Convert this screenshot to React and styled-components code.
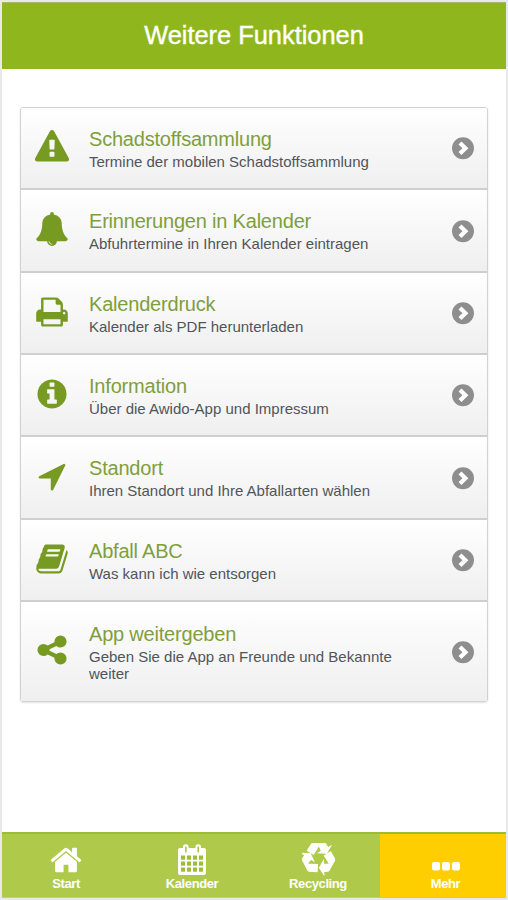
import styled, { createGlobalStyle } from 'styled-components';

const GlobalStyle = createGlobalStyle`
  * {
    box-sizing: border-box;
  }
  body {
    margin: 0;
    background: #ececec;
    font-family: 'Liberation Sans', Arial, sans-serif;
  }
`;

const Screen = styled.div`
  display: flex;
  flex-direction: column;
  width: 508px;
  height: 900px;
  padding: 2px;
  background: #e9e9e9;
`;

const Header = styled.header`
  flex: none;
  height: 67px;
  border-top: 1px solid #a5b773;
  background: #8fb71d;
  display: flex;
  align-items: center;
  justify-content: center;
`;

const Title = styled.h1`
  margin: 0;
  padding-bottom: 2px;
  color: white;
  font-size: 25.4px;
  line-height: 30px;
  font-weight: 400;
  white-space: nowrap;
  -webkit-text-stroke: 0.4px white;
`;

const Content = styled.main`
  flex: 1;
  padding: 38px 18px 0;
  background: white;
`;

const List = styled.div`
  border: 1.5px solid #d2d2d2;
  border-radius: 3px;
  box-shadow: 0 1px 2px rgba(0, 0, 0, 0.12);
  overflow: hidden;
`;

const Row = styled.div`
  height: ${({ $height }) => $height}px;
  display: flex;
  align-items: center;
  padding: 1px 12px 0 14px;
  background: linear-gradient(#ffffff, #efefef);
  border-bottom: 2px solid #cfcfcf;
  &:last-child {
    border-bottom: none;
  }
`;

const RowIcon = styled.svg`
  flex: none;
  width: 34px;
  height: 34px;
  margin-bottom: 4px;
  fill: #769a22;
`;

const RowText = styled.div`
  flex: 1;
  padding-left: 20px;
`;

const RowTitle = styled.div`
  color: #7f9f3c;
  font-size: 20px;
  line-height: 23px;
  padding-bottom: 2px;
  letter-spacing: -0.2px;
  white-space: nowrap;
`;

const RowNote = styled.div`
  max-width: 325px;
  color: #50555a;
  font-size: 15px;
  line-height: 17px;
`;

const Chevron = styled.svg`
  flex: none;
  width: 25px;
  height: 25px;
  fill: #8e8e8e;
`;

const Footer = styled.footer`
  flex: none;
  height: 66px;
  display: grid;
  grid-template-columns: repeat(4, 1fr);
  border-top: 2px solid #9dbc35;
  border-bottom: 1px solid #c0d080;
`;

const Tab = styled.div`
  display: flex;
  flex-direction: column;
  align-items: center;
  padding: 9px 0 0 2px;
  background: ${({ $active }) => ($active ? '#ffce00' : '#afca4b')};
  color: white;
  &:last-child {
    padding-left: 5px;
  }
`;

const TabIcon = styled.div`
  height: 33px;
  display: flex;
  align-items: center;
  svg {
    display: block;
    fill: white;
  }
`;

const TabLabel = styled.div`
  font-size: 13px;
  line-height: 15px;
  font-weight: 700;
  letter-spacing: -0.4px;
`;

const icons = {
  warning: 'M1024 1375v-190q0-14-9.5-23.5t-22.5-9.5h-192q-13 0-22.5 9.5t-9.5 23.5v190q0 14 9.5 23.5t22.5 9.5h192q13 0 22.5-9.5t9.5-23.5zm-2-374l18-459q0-12-10-19-13-11-24-11h-220q-11 0-24 11-10 7-10 21l17 457q0 10 10 16.5t24 6.5h185q14 0 23.5-6.5t10.5-16.5zm-14-934l768 1408q35 63-2 126-17 29-46.5 46t-63.5 17h-1536q-34 0-63.5-17t-46.5-46q-37-63-2-126l768-1408q17-31 47-49t65-18 65 18 47 49z',
  bell: 'M912 1696q0-16-16-16-59 0-101.5-42.5t-42.5-101.5q0-16-16-16t-16 16q0 73 51.5 124.5t124.5 51.5q16 0 16-16zm816-288q0 52-38 90t-90 38h-448q0 106-75 181t-181 75-181-75-75-181h-448q-52 0-90-38t-38-90q50-42 91-88t85-119.5 74.5-158.5 50-206 19.5-260q0-152 117-282.5t307-158.5q-8-19-8-39 0-40 28-68t68-28 68 28 28 68q0 20-8 39 190 28 307 158.5t117 282.5q0 139 19.5 260t50 206 74.5 158.5 85 119.5 91 88z',
  print: 'M448 1536h896v-256h-896v256zm0-640h896v-384h-160q-40 0-68-28t-28-68v-160h-640v640zm1152 64q0-26-19-45t-45-19-45 19-19 45 19 45 45 19 45-19 19-45zm128 0v416q0 13-9.5 22.5t-22.5 9.5h-224v160q0 40-28 68t-68 28h-960q-40 0-68-28t-28-68v-160h-224q-13 0-22.5-9.5t-9.5-22.5v-416q0-79 56.5-135.5t135.5-56.5h64v-544q0-40 28-68t68-28h672q40 0 88 20t76 48l152 152q28 28 48 76t20 88v256h64q79 0 135.5 56.5t56.5 135.5z',
  info: 'M1152 1376v-160q0-14-9-23t-23-9h-96v-512q0-14-9-23t-23-9h-320q-14 0-23 9t-9 23v160q0 14 9 23t23 9h96v320h-96q-14 0-23 9t-9 23v160q0 14 9 23t23 9h448q14 0 23-9t9-23zm-128-896v-160q0-14-9-23t-23-9h-192q-14 0-23 9t-9 23v160q0 14 9 23t23 9h192q14 0 23-9t9-23zm640 416q0 209-103 385.5t-279.5 279.5-385.5 103-385.5-103-279.5-279.5-103-385.5 103-385.5 279.5-279.5 385.5-103 385.5 103 279.5 279.5 103 385.5z',
  location: 'M1593 349l-640 1280q-17 35-57 35-5 0-15-2-22-5-35.5-22.5t-13.5-39.5v-576h-576q-22 0-39.5-13.5t-22.5-35.5 4-42 29-30l1280-640q13-7 29-7 27 0 45 19 15 14 18.5 34.5t-6.5 39.5z',
  book: 'M1703 478q40 57 18 129l-275 906q-19 64-76.5 107.5t-122.5 43.5h-923q-77 0-148.5-53.5t-99.5-131.5q-24-67-2-127 0-4 3-27t4-37q1-8-3-21.5t-3-19.5q2-11 8-21t16.5-23.5 16.5-23.5q23-38 45-91.5t30-91.5q3-10 .5-30t-.5-28q3-11 17-28t17-23q21-36 42-92t25-90q1-9-2.5-32t.5-28q4-13 22-30.5t22-22.5q19-26 42.5-84.5t27.5-96.5q1-8-3-25.5t-2-26.5q2-8 9-18t18-23 17-21q8-12 16.5-30.5t15-35 16-36 19.5-32 26.5-23.5 36-11.5 47.5 5.5l-1 3q38-9 51-9h761q74 0 114 56t18 130l-274 906q-36 119-71.5 153.5t-128.5 34.5h-869q-27 0-38 15-11 16-1 43 24 70 144 70h923q29 0 56-15.5t35-41.5l300-987q7-22 5-57 38 15 59 43zm-1064 2q-4 13 2 22.5t20 9.5h608q13 0 25.5-9.5t16.5-22.5l21-64q4-13-2-22.5t-20-9.5h-608q-13 0-25.5 9.5t-16.5 22.5zm-83 256q-4 13 2 22.5t20 9.5h608q13 0 25.5-9.5t16.5-22.5l21-64q4-13-2-22.5t-20-9.5h-608q-13 0-25.5 9.5t-16.5 22.5z',
  share: 'M1344 1024q133 0 226.5 93.5t93.5 226.5-93.5 226.5-226.5 93.5-226.5-93.5-93.5-226.5q0-12 2-34l-360-180q-92 86-218 86-133 0-226.5-93.5t-93.5-226.5 93.5-226.5 226.5-93.5q126 0 218 86l360-180q-2-22-2-34 0-133 93.5-226.5t226.5-93.5 226.5 93.5 93.5 226.5-93.5 226.5-226.5 93.5q-126 0-218-86l-360 180q2 22 2 34t-2 34l360 180q92-86 218-86z',
  home: 'M1472 992v480q0 26-19 45t-45 19h-384v-384h-256v384h-384q-26 0-45-19t-19-45v-480q0-1 .5-3t.5-3l575-474 575 474q1 2 1 6zm223-69l-62 74q-8 9-21 11h-3q-13 0-21-7l-692-577-692 577q-12 8-24 7-13-2-21-11l-62-74q-8-10-7-23.5t11-21.5l719-599q32-26 76-26t76 26l244 204v-195q0-14 9-23t23-9h192q14 0 23 9t9 23v408l219 182q10 8 11 21.5t-7 23.5z',
  recycle: 'M836 1169l-15 368-2 22-420-29q-36-3-67-31.5t-47-65.5q-11-27-14.5-55t4-65 12-55 21.5-64 19-53q78 12 509 28zm-387-586l180 379-147-92q-63 72-111.5 144.5t-72.5 125-39.5 94.5-18.5 63l-4 21-190-357q-17-26-18-56t6-47l8-18q35-63 114-188l-140-86zm1231 517l-188 359q-12 29-36.5 46.5t-43.5 20.5l-18 4q-71 7-219 12l8 164-230-367 211-362 7 173q170 16 283 5t170-33zm-785-924q-47 63-265 435l-317-187-19-12 225-356q20-31 60-45t80-10q24 2 48.5 12t42 21 41.5 33 36 34.5 36 39.5 32 35zm655 307l212 363q18 37 12.5 76t-27.5 74q-13 20-33 37t-38 28-48.5 22-47 16-51.5 14-46 12q-34-72-265-436l313-195zm-143-226l142-83-220 373-419-20 151-86q-34-89-75-166t-75.5-123.5-64.5-80-47-46.5l-17-13 405 1q31-3 58 10.5t39 28.5l11 15q39 61 112 190z',
};

const entries = [
  { icon: 'warning', title: 'Schadstoffsammlung', note: 'Termine der mobilen Schadstoffsammlung', height: 82 },
  { icon: 'bell', title: 'Erinnerungen in Kalender', note: 'Abfuhrtermine in Ihren Kalender eintragen', height: 83 },
  { icon: 'print', title: 'Kalenderdruck', note: 'Kalender als PDF herunterladen', height: 82 },
  { icon: 'info', title: 'Information', note: 'Über die Awido-App und Impressum', height: 82 },
  { icon: 'location', title: 'Standort', note: 'Ihren Standort und Ihre Abfallarten wählen', height: 83 },
  { icon: 'book', title: 'Abfall ABC', note: 'Was kann ich wie entsorgen', height: 82 },
  { icon: 'share', title: 'App weitergeben', note: 'Geben Sie die App an Freunde und Bekannte weiter', height: 99 },
];

const CalendarIcon = () => (
  <svg width="28" height="31" viewBox="0 0 28 31">
    <path d="M2 4h3V3a2.8 2.8 0 0 1 5.6 0v1h6.8V3a2.8 2.8 0 0 1 5.6 0v1h3a2 2 0 0 1 2 2v23a2 2 0 0 1-2 2H2a2 2 0 0 1-2-2V6a2 2 0 0 1 2-2z" />
    <g fill="#9fbc3b">
      <rect x="7.2" y="2.5" width="1.4" height="6" rx=".5" />
      <rect x="19.5" y="2.5" width="1.4" height="6" rx=".5" />
      {[11.5, 17.5, 23.5].map((y) =>
        [3, 9, 15, 21].map((x) => <rect key={`${x}-${y}`} x={x} y={y} width="4" height="4.2" />)
      )}
    </g>
  </svg>
);

const DotsIcon = () => (
  <svg width="28" height="31" viewBox="0 0 28 31">
    {[0, 10, 20].map((x) => (
      <rect key={x} x={x} y="18" width="8" height="8.5" rx="2" />
    ))}
  </svg>
);

export default function App() {
  return (
    <>
      <GlobalStyle />
      <Screen>
        <Header>
          <Title>Weitere Funktionen</Title>
        </Header>
        <Content>
          <List>
            {entries.map(({ icon, title, note, height }) => (
              <Row key={icon} $height={height}>
                <RowIcon viewBox="0 0 1792 1792">
                  <path d={icons[icon]} />
                </RowIcon>
                <RowText>
                  <RowTitle>{title}</RowTitle>
                  <RowNote>{note}</RowNote>
                </RowText>
                <Chevron viewBox="0 0 25 25">
                  <circle cx="13" cy="12.3" r="11" />
                  <path d="M10 7l5.4 5.300-5.400 5.300" fill="none" stroke="white" strokeWidth="4.2" />
                </Chevron>
              </Row>
            ))}
          </List>
        </Content>
        <Footer>
          <Tab>
            <TabIcon>
              <svg width="34" height="34" viewBox="0 0 1792 1792">
                <path d={icons.home} />
              </svg>
            </TabIcon>
            <TabLabel>Start</TabLabel>
          </Tab>
          <Tab>
            <TabIcon>
              <CalendarIcon />
            </TabIcon>
            <TabLabel>Kalender</TabLabel>
          </Tab>
          <Tab>
            <TabIcon>
              <svg width="33" height="33" viewBox="0 0 1792 1792">
                <path d={icons.recycle} stroke="white" strokeWidth="60" />
              </svg>
            </TabIcon>
            <TabLabel>Recycling</TabLabel>
          </Tab>
          <Tab $active>
            <TabIcon>
              <DotsIcon />
            </TabIcon>
            <TabLabel>Mehr</TabLabel>
          </Tab>
        </Footer>
      </Screen>
    </>
  );
}
